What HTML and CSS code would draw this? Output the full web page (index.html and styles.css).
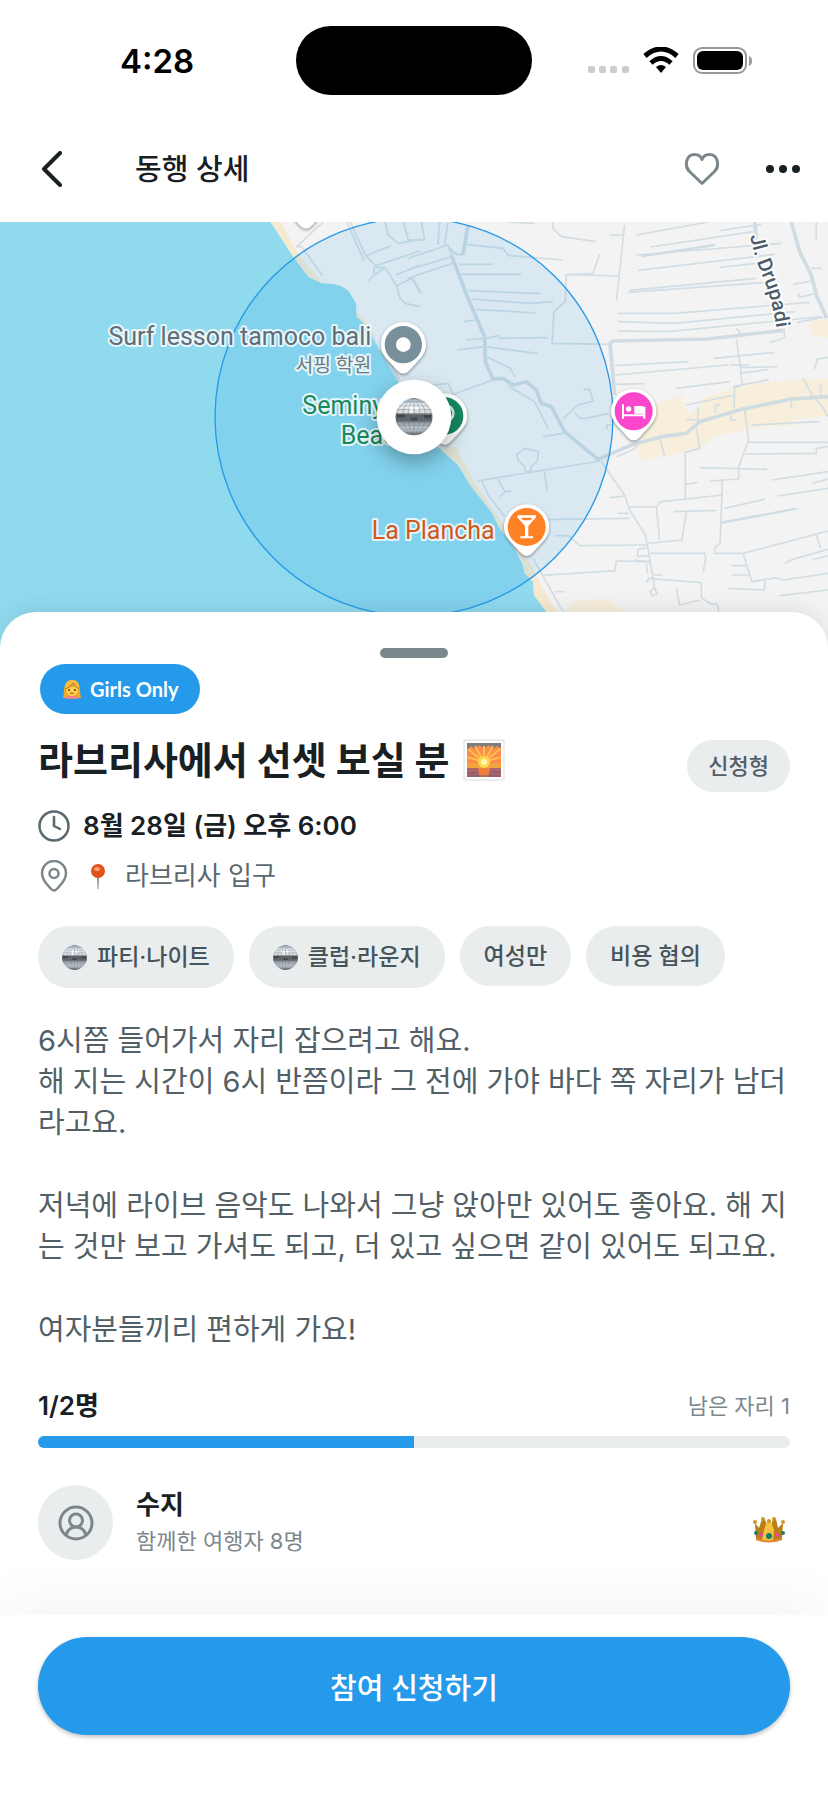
FILE: index.html
```html
<!DOCTYPE html>
<html lang="ko">
<head>
  <meta charset="UTF-8">
  <meta name="viewport" content="width=device-width, initial-scale=1.0">
  <title>동행 상세</title>
  <link rel="stylesheet" href="styles.css">
</head>
<body>
  <!-- shared drawings -->
  <svg class="defs" width="0" height="0" aria-hidden="true">
    <defs>
      <linearGradient id="ball-fill" x1="0" y1="0" x2="0" y2="1">
        <stop offset="0" stop-color="#a9c3d6"/>
        <stop offset=".2" stop-color="#eef1f3"/>
        <stop offset=".4" stop-color="#d5d9dd"/>
        <stop offset=".45" stop-color="#596066"/>
        <stop offset=".6" stop-color="#5f666b"/>
        <stop offset=".7" stop-color="#a9b0b5"/>
        <stop offset=".85" stop-color="#c3ccd3"/>
        <stop offset="1" stop-color="#5f676d"/>
      </linearGradient>
      <symbol id="ball" viewBox="0 0 48 48">
        <circle cx="24" cy="24" r="24" fill="url(#ball-fill)"/>
        <path d="M10 5h28M5 10h38M2 15h44M1 20h46M0 25h48M1 30h46M3 35h42M7 40h34M14 45h20" fill="none" stroke="#6a737a" opacity=".55"/>
        <path d="M24 0v48M24 0C14 9 14 39 24 48M24 0c10 9 10 39 0 48M24 0C4 9 4 39 24 48M24 0c20 9 20 39 0 48M24 0C-6 9-6 39 24 48M24 0c30 9 30 39 0 48" fill="none" stroke="#6a737a" opacity=".55"/>
        <path d="M2 21h10v4H2zM20 25h8v4h-8zM37 22h9v4h-9z" fill="#2f363b" opacity=".6"/>
        <path d="M18 11h5v4h-5zM25 11h5v4h-5zM18 16h5v3h-5z" fill="#fff" opacity=".8"/>
      </symbol>
      <path id="pin" d="M-68 0A68 68 0 1 1 68 0C68 32 44 46 20 76Q0 98-20 76C-44 46-68 32-68 0Z"/>
    </defs>
  </svg>

  <div class="status-bar">
    <span class="time">4:28</span>
    <span class="island"></span>
    <svg class="status-icons" width="164" height="28" viewBox="0 0 164 28" aria-hidden="true">
      <g fill="#c9cdd0">
        <rect x="0" y="19" width="7" height="7" rx="2"/>
        <rect x="11" y="19" width="7" height="7" rx="2"/>
        <rect x="22" y="19" width="7" height="7" rx="2"/>
        <rect x="34" y="19" width="7" height="7" rx="2"/>
      </g>
      <g fill="none" stroke="#000" stroke-width="5">
        <path d="M57 9Q73-5 89 9"/>
        <path d="M63 16Q73 7 83 16"/>
      </g>
      <path d="M68 20Q73 16 78 20L73 26Z"/>
      <rect x="106" y="1" width="52" height="25" rx="8" fill="none" stroke="#949a9d" stroke-width="2"/>
      <rect x="109" y="4" width="46" height="19" rx="6"/>
      <path d="M161 9q3 1 3 5t-3 5z" fill="#949a9d"/>
    </svg>
  </div>

  <header class="header">
    <button class="icon-button" type="button" aria-label="뒤로">
      <svg width="20" height="36" viewBox="0 0 20 36"><path d="M18 2L2 18l16 16" fill="none" stroke="#182024" stroke-width="4" stroke-linecap="round" stroke-linejoin="round"/></svg>
    </button>
    <h1 class="header-title">동행 상세</h1>
    <button class="icon-button like" type="button" aria-label="찜하기">
      <svg width="36" height="34" viewBox="0 0 36 34"><path d="M18 31.500L5.500 19.500C0 14 2 2.500 10.500 2.500C14.500 2.500 17 4.500 18 7.500C19 4.500 21.500 2.500 25.500 2.500C34 2.500 36 14 30.500 19.500Z" fill="none" stroke="#7c878c" stroke-width="3" stroke-linejoin="round"/></svg>
    </button>
    <button class="icon-button" type="button" aria-label="더보기">
      <svg width="34" height="8" viewBox="0 0 34 8" fill="#182024"><circle cx="4" cy="4" r="4"/><circle cx="17" cy="4" r="4"/><circle cx="30" cy="4" r="4"/></svg>
    </button>
  </header>

  <div class="map">
    <svg class="map-canvas" viewBox="0 21 2484 1290" preserveAspectRatio="xMidYMin slice" role="img" aria-label="모임 장소 지도">
      <rect y="21" width="2484" height="1290" fill="#90daee"/>
      <!-- land and beach -->
      <path d="M812 21L880 125 925 185 965 205 1000 207Q1045 215 1056 245L1068 265 1070 300 1110 340 1135 400 1175 465 1195 500 1240 640 1319 700 1374 750 1414 815 1474 890 1499 940 1544 1000 1569 1050 1574 1075 1599 1100 1602 1140 1639 1190 1700 1311H2484V21Z" fill="#f3f3f3"/>
      <path d="M812 21H842L890 110 960 195 965 205 925 185 880 125ZM1070 290L1118 345 1128 395 1110 345 1070 305ZM1319 700L1369 695 1419 795 1464 860 1509 930 1554 1000 1594 1050 1624 1110 1669 1190 1700 1311 1639 1190 1602 1140 1599 1100 1574 1075 1569 1050 1544 1000 1499 940 1474 890 1414 815 1374 750Z" fill="#f5ead0"/>
      <path d="M1135 400L1160 420 1200 490 1195 505 1175 465Z" fill="#dcdcdc"/>
      <g transform="translate(1224 0)">
        <path d="M685 690L700 736 875 705 915 665 1085 630 1110 635 1155 630V615L1260 602V490L1185 492 1060 505 980 518 880 552 876 575 840 600 822 542 750 560ZM1200 320L1260 312V370L1215 360ZM470 1190L500 1158 600 1152 650 1190Z" fill="#f7efdc"/>
        <!-- main roads -->
        <g fill="none" stroke="#d0dbe2" stroke-width="11" stroke-linejoin="round">
          <path d="M130 120L180 250 230 365 232 440 255 492 285 490 315 510 355 500 385 525 400 565 430 575 470 650 570 733 670 690 760 665 835 655 875 620 1000 583 1150 552 1260 545"/>
          <path d="M620 540L606 385 615 378 900 372 1125 346"/>
          <path d="M1150 21L1175 110 1210 180 1225 240 1256 310M180 30L165 120M1040 21L1045 75"/>
          <path d="M120 97L145 118 165 118M940 923L1165 881M700 124L920 90" stroke-width="7"/>
        </g>
        <!-- side streets -->
        <g fill="none" stroke="#d2dde4" stroke-width="5" stroke-linejoin="round">
          <path d="M0 130L120 90 130 120M0 165L130 125M0 190L135 145M95 21L90 90M120 21L110 90M0 75L50 75 40 21M0 195L15 190 40 235"/>
          <path d="M175 88L285 100 300 121 465 135M155 148H255M160 178H340M180 227L398 236M190 252L370 265 435 260M205 283L382 294M235 370L270 362 275 370 420 368M147 405L230 395 392 416M168 320L200 315M175 375L230 370"/>
          <path d="M235 425L305 458 322 487M130 540L255 495M300 512L380 560 420 640M405 665L465 655M465 610L510 570 555 558 545 523H527M500 592Q512 612 530 611L600 596M610 630H597V642"/>
          <path d="M327 718L350 700 392 710 388 738 370 755V768H350V755L330 735ZM208 798L575 738M408 765L418 828M268 788L290 830 310 828M275 845L290 832M222 798L240 840 290 905M375 1030L465 1190M395 914L665 910M440 962H480L515 992 720 990M405 1081L620 1067 625 1038 728 1040M440 1130H470"/>
          <path d="M435 21V40L460 65 565 80M300 21L380 25M650 30L640 120 625 258M605 60H645M575 118L555 175 475 180 472 260 438 290 432 385 606 388M475 178L630 183"/>
          <path d="M685 60L900 21M728 96L1035 50M935 47L1060 28M685 120L1120 85M690 166L1100 118M935 157L1095 140M665 226L1045 190M660 232L1110 200M628 295H800L1205 262M630 320L800 325 1160 290M628 348L780 350 1240 305"/>
          <path d="M620 452L840 440M622 480L960 450M918 430L1100 412M625 508L710 506M803 520L965 500M985 372L995 440 1003 510 980 518 978 580M965 450H1025M995 458L1108 455M995 475L1080 464M975 515L1082 494M985 340L995 350V368M1085 383L1130 368 1128 340"/>
          <path d="M1225 21V75M1210 160H1240M1155 208L1210 198M1225 235L1175 247 1170 235M1168 322L1245 307M1220 462L1228 432 1260 428M1185 490L1215 545 1240 570 1260 605M1238 510V545M1150 555V580M1030 630L1235 620M1020 682H1260"/>
          <path d="M835 570L980 540M870 575V615L835 613M922 595V572L935 568M968 590V615H985M1010 585L1022 675 992 755V792L905 798M756 670L770 725M865 640L875 700 832 712V850M832 808L868 803M874 758L1078 763M1012 717L1225 715V700L1260 695"/>
          <path d="M625 725L680 702 685 690M580 740L650 840 665 885 712 960 725 1030 740 1120M605 848L650 843M665 876H745L758 860 835 852 942 840V798M745 876L755 975M630 895H662M798 890L925 886M835 890L822 975 720 985M950 880L1072 852M942 840L936 985 920 998V1015H1005L1120 985 1260 948M1005 1015L1032 1100 1105 1088 1125 1095 1260 1075"/>
          <path d="M1092 795L1260 770M1108 843L1260 820M1213 805L1260 792M1225 960L1237 998M1130 1045L1155 1033 1260 1003M1212 1035L1260 1022M970 1052H1015M972 1080H1025M960 1120L1070 1125V1095M1116 1142L1260 1125M728 1015H890L893 1030 886 1070M690 1003L715 998M690 1003L688 1025 728 1022M680 1035L730 1042M715 1045L718 1075M740 1080H762M716 1103L722 1090 880 1103V1148L905 1165 928 1168 932 1190M805 1120L815 1170 875 1155M740 1118L726 1130 733 1142 747 1136Z"/>
        </g>
      </g>
      <g fill="none" stroke="#d2dde4" stroke-width="5" stroke-linejoin="round">
        <path d="M970 21L890 95H905L967 182M1040 21L1092 137M1050 21L1097 122 1127 152 1260 108M1097 122L1172 93M1155 21L1165 60 1195 85 1260 73M1210 21L1225 75M1105 198L1122 180V158H1155L1190 212 1200 250 1215 265 1260 275M1188 180L1260 150M1190 212L1235 190 1260 232M1122 180L1155 160"/>
        <path d="M1297 510L1344 505 1364 545"/>
      </g>

      <circle cx="1242" cy="606" r="597" fill="#2599ea" fill-opacity=".12" stroke="#2599ea" stroke-width="4"/>

      <!-- place markers -->
      <g class="markers">
        <use href="#pin" x="918" y="-46" fill="#fff"/>
        <g transform="translate(1334 603)">
          <use href="#pin" fill="#fff"/>
          <circle r="56" fill="#168a62"/>
          <circle cx="2" cy="-8" r="24" fill="none" stroke="#d9eee6" stroke-width="8"/>
        </g>
        <g transform="translate(1210 389)">
          <use href="#pin" fill="#fff"/>
          <circle r="56" fill="#78909c"/>
          <circle r="22" fill="#fff"/>
        </g>
        <g transform="translate(1901 589)">
          <use href="#pin" fill="#fff"/>
          <circle r="57" fill="#fa46cb"/>
          <path d="M-32-21V22M-32 12H32M32-14V22" fill="none" stroke="#fff" stroke-width="6"/>
          <circle cx="-15" cy="-7" r="8" fill="#fff"/>
          <path d="M2-16H24Q32-16 32-8V7H2Z" fill="#fff"/>
        </g>
        <g transform="translate(1580 936)">
          <use href="#pin" fill="#fff"/>
          <circle r="57" fill="#ff8126"/>
          <path d="M-28-35H28V-29L5-3V28H19V34H-19V28H-5V-3L-28-29ZM-17-28L-11-20H11L17-28Z" fill="#fff" fill-rule="evenodd"/>
        </g>
      </g>

      <g class="place-labels">
        <text x="1114" y="391" text-anchor="end" fill="#5f6e76">Surf lesson tamoco bali</text>
        <text class="place-type" x="1114" y="470" text-anchor="end" fill="#6c7b83">서핑 학원</text>
        <text x="907" y="597" fill="#18885f">Seminyak</text>
        <text x="1022" y="688" fill="#18885f">Beach</text>
        <text x="1484" y="973" text-anchor="end" fill="#d2581a">La Plancha</text>
        <path id="drupadi" d="M2250 62Q2262 125 2286 180Q2320 260 2332 360" fill="none"/>
        <text class="street"><textPath href="#drupadi">Jl. Drupadi</textPath></text>
      </g>

      <g class="meeting-pin">
        <circle cx="1242" cy="606" r="112" fill="#fff"/>
        <use href="#ball" x="1186" y="549" width="112" height="112"/>
      </g>
    </svg>
  </div>

  <main class="sheet">
    <div class="handle"></div>

    <div class="girls-only">
      <svg width="20" height="20" viewBox="0 0 20 20" aria-hidden="true">
        <path d="M1 19Q2 15 2 10Q3 1 10 1Q17 1 18 10Q18 15 19 19Z" fill="#eda72a"/>
        <path d="M4 18Q10 14 16 18V20H4Z" fill="#ec7f8c"/>
        <path d="M4 8H16V11Q15 17 10 17Q5 17 4 11Z" fill="#ffd04c"/>
        <path d="M3 10Q8 9 11 4Q13 8 17 10Q18 1 10 1Q3 1 3 10Z" fill="#f4bd46"/>
        <path d="M11 4Q8 9 3 10M11 4Q13 8 17 10" fill="none" stroke="#b8741b"/>
        <circle cx="7" cy="11" r="1" fill="#5a3c1c"/><circle cx="13" cy="11" r="1" fill="#5a3c1c"/>
        <path d="M8 14Q10 15 12 14" fill="none" stroke="#b5482e"/>
      </svg>
      <span>Girls Only</span>
    </div>

    <div class="title-row">
      <h2 class="title">
        라브리사에서 선셋 보실 분
        <svg width="42" height="42" viewBox="0 0 42 42" role="img" aria-label="일출">
          <rect x="1" y="1" width="40" height="40" fill="#fff" stroke="#dcdcdc"/>
          <rect x="4" y="4" width="34" height="34" fill="#fb8c4e"/>
          <path d="M4 4H38V9L34 7 30 10 26 6 21 9 16 6 12 10 8 7 4 11Z" fill="#7d7a83"/>
          <path d="M21 23L5 10M21 23L12 7M21 23V7M21 23L30 7M21 23L37 10M21 23L4 18M21 23L38 18" stroke="#ffc04a" stroke-width="2"/>
          <rect x="4" y="24" width="34" height="5" fill="#f5a43d"/>
          <rect x="4" y="29" width="34" height="9" fill="#a9656b"/>
          <circle cx="21" cy="23" r="6" fill="#ffd84f"/><circle cx="21" cy="23" r="3" fill="#fff3b0"/>
          <path d="M15 29H27L25 38H17Z" fill="#ee7f3c"/>
          <path d="M4 34H14M28 33H38M5 37H37" stroke="#7b5a70"/>
        </svg>
      </h2>
      <span class="join-type">신청형</span>
    </div>

    <div class="info date">
      <svg width="32" height="32" viewBox="0 0 32 32" aria-hidden="true"><g fill="none" stroke="#5b686f" stroke-width="2.500" stroke-linecap="round" stroke-linejoin="round"><circle cx="16" cy="16" r="14.500"/><path d="M16 7V16L22 19"/></g></svg>
      <span>8월 28일 (금) 오후 6:00</span>
    </div>
    <div class="info place">
      <svg width="32" height="32" viewBox="0 0 32 32" aria-hidden="true"><g fill="none" stroke="#7c878c" stroke-width="2.500"><path d="M16 30.500Q14 30.500 10 25.500Q4 19 4 13A12 12 0 0 1 28 13Q28 19 22 25.500Q18 30.500 16 30.500Z"/><circle cx="16" cy="13.500" r="4.500"/></g></svg>
      <svg class="pushpin" width="16" height="26" viewBox="0 0 16 26" aria-hidden="true"><path d="M7 12H9L8.500 26H7.500Z" fill="#8b8f93"/><circle cx="8" cy="8" r="7" fill="#e0531f"/><ellipse cx="7" cy="6" rx="3" ry="2" fill="#f8a06c"/></svg>
      <span>라브리사 입구</span>
    </div>

    <ul class="tags">
      <li class="tag tag-emoji"><svg width="25" height="25" aria-hidden="true"><use href="#ball"/></svg>파티·나이트</li>
      <li class="tag tag-emoji"><svg width="25" height="25" aria-hidden="true"><use href="#ball"/></svg>클럽·라운지</li>
      <li class="tag">여성만</li>
      <li class="tag">비용 협의</li>
    </ul>

    <div class="description">
      <p>6시쯤 들어가서 자리 잡으려고 해요.<br>해 지는 시간이 6시 반쯤이라 그 전에 가야 바다 쪽 자리가 남더라고요.</p>
      <p>저녁에 라이브 음악도 나와서 그냥 앉아만 있어도 좋아요. 해 지는 것만 보고 가셔도 되고, 더 있고 싶으면 같이 있어도 되고요.</p>
      <p>여자분들끼리 편하게 가요!</p>
    </div>

    <div class="seats">
      <strong>1/2명</strong>
      <span>남은 자리 1</span>
    </div>
    <div class="progress" role="progressbar" aria-label="모집 인원" aria-valuemin="0" aria-valuemax="2" aria-valuenow="1">
      <div class="progress-fill" style="width: 50%"></div>
    </div>

    <div class="member">
      <div class="avatar">
        <svg width="36" height="36" viewBox="0 0 36 36" aria-hidden="true"><g fill="none" stroke="#7c878c" stroke-width="3"><circle cx="18" cy="18" r="16"/><circle cx="18" cy="15.500" r="6.500"/><path d="M8 30Q10.500 22 18 22Q25.500 22 28 30"/></g></svg>
      </div>
      <div class="member-text">
        <div class="member-name">수지</div>
        <div class="member-sub">함께한 여행자 8명</div>
      </div>
      <svg class="crown" width="44" height="44" viewBox="0 0 44 44" role="img" aria-label="방장">
        <path d="M9 22L13 27 16 18H19L21 25 23 20 25 25 27 18H30L32 27 37 22 36 38Q23 44 10 38Z" fill="#b97f16"/>
        <path d="M16 39L18 29 21 20H25L28 29 27 40Q20 41 16 39Z" fill="#f7c243"/>
        <path d="M10 38Q23 43 36 38" fill="none" stroke="#dd8b38" stroke-width="2"/>
        <g fill="#cf982b"><circle cx="9" cy="21" r="2"/><circle cx="17" cy="18" r="2"/><circle cx="23" cy="20" r="2"/><circle cx="28" cy="18" r="2"/><circle cx="37" cy="21" r="2"/></g>
        <circle cx="23" cy="35" r="3" fill="#15806a"/><circle cx="10" cy="32" r="2" fill="#15806a"/><circle cx="37" cy="32" r="2" fill="#15806a"/>
        <circle cx="15" cy="34" r="2" fill="#f63fb3"/><circle cx="31" cy="34" r="2" fill="#f63fb3"/>
      </svg>
    </div>
  </main>

  <footer class="bottom-bar">
    <button class="join-button" type="button">참여 신청하기</button>
  </footer>
</body>
</html>
```
FILE: styles.css
```css
* {
  box-sizing: border-box;
}
body {
  margin: 0;
  min-height: 100vh;
  display: flex;
  flex-direction: column;
  background-color: #fff;
  color: #182024;
  font-family: Inter, "Noto Sans CJK KR", sans-serif;
}
h1, h2, p, ul {
  margin: 0;
  padding: 0;
}
svg {
  display: block;
  flex-shrink: 0;
}
button {
  border: 0;
  padding: 0;
  background: none;
  font-family: inherit;
  cursor: pointer;
}
.defs {
  position: absolute;
}

/* status bar */
.status-bar {
  display: grid;
  grid-template-columns: 1fr 236px 1fr;
  align-items: center;
  padding: 26px 0 21px;
}
.time {
  padding-left: 120px;
  color: #000;
  font-size: 33px;
  font-weight: 600;
  line-height: 40px;
}
.island {
  height: 69px;
  border-radius: 35px;
  background-color: #000;
}
.status-icons {
  justify-self: end;
  margin-right: 76px;
}

/* header */
.header {
  display: flex;
  align-items: center;
  height: 106px;
  padding: 0 28px 0 42px;
}
.icon-button {
  display: flex;
  align-items: center;
  justify-content: center;
  height: 48px;
}
.header-title {
  flex: 1;
  padding: 2px 0 0 73px;
  font-size: 29px;
  font-weight: 500;
  line-height: 40px;
}
.like {
  margin-right: 46px;
}

/* map */
.map {
  height: 430px;
}
.map-canvas {
  width: 100%;
  height: 100%;
}
.markers > * {
  filter: drop-shadow(0 4px 5px rgba(0, 0, 0, 0.4));
}
.meeting-pin {
  filter: drop-shadow(0 24px 30px rgba(0, 0, 0, 0.3));
}
.place-labels {
  font-family: Roboto, "Noto Sans CJK KR", sans-serif;
  font-size: 75px;
  paint-order: stroke;
  stroke: rgba(255, 255, 255, 0.8);
  stroke-width: 12px;
  stroke-linejoin: round;
}
.place-labels path {
  stroke: none;
}
.place-type {
  font-size: 58px;
}
.street {
  font-size: 60px;
  font-weight: 500;
  fill: #4c5b65;
}

/* sheet */
.sheet {
  position: relative;
  flex: 1;
  margin-top: -40px;
  padding: 36px 38px 55px;
  border-radius: 36px 36px 0 0;
  background-color: #fff;
  box-shadow: 0 -4px 20px rgba(0, 0, 0, 0.08);
}
.handle {
  width: 68px;
  height: 10px;
  margin: 0 auto 6px;
  border-radius: 5px;
  background-color: #7c878c;
}
.girls-only {
  display: flex;
  align-items: center;
  gap: 8px;
  width: fit-content;
  height: 50px;
  margin-left: 2px;
  padding: 0 22px;
  border-radius: 25px;
  background-color: #2599ea;
  color: #fff;
  font-family: Lato, sans-serif;
  font-size: 20px;
  font-weight: 700;
}
.title-row {
  display: flex;
  justify-content: space-between;
  align-items: flex-start;
  margin-top: 26px;
}
.title {
  display: flex;
  align-items: center;
  gap: 13px;
  font-size: 38px;
  font-weight: 700;
  line-height: 40px;
  height: 40px;
}
.join-type {
  padding: 10px 21px;
  border-radius: 26px;
  background-color: #e9edee;
  color: #525f66;
  font-size: 22px;
  font-weight: 500;
  line-height: 32px;
}
.info {
  display: flex;
  align-items: center;
  margin-top: 18px;
  font-size: 26px;
  line-height: 32px;
}
.date {
  gap: 13px;
  font-weight: 600;
}
.place {
  color: #5b686f;
}
.pushpin {
  margin: 0 19px 0 20px;
}
.tags {
  display: flex;
  flex-wrap: wrap;
  align-items: flex-start;
  gap: 15px;
  margin-top: 34px;
  list-style: none;
}
.tag {
  padding: 14px 24px;
  border-radius: 31px;
  background-color: #e9edee;
  color: #46545b;
  font-size: 23px;
  font-weight: 500;
  line-height: 32px;
}
.tag-emoji {
  display: flex;
  align-items: center;
  gap: 10px;
  line-height: 34px;
}
.description {
  display: flex;
  flex-direction: column;
  gap: 42px;
  margin-top: 32px;
  color: #525f66;
  font-size: 29px;
  line-height: 41px;
}
.seats {
  display: flex;
  justify-content: space-between;
  margin-top: 40px;
  font-size: 26px;
  line-height: 32px;
}
.seats strong {
  font-weight: 600;
}
.seats span {
  color: #7c878c;
  font-size: 22px;
}
.progress {
  height: 12px;
  margin-top: 14px;
  border-radius: 6px;
  background-color: #e9edee;
  overflow: hidden;
}
.progress-fill {
  height: 100%;
  background-color: #2599ea;
}
.member {
  display: flex;
  align-items: center;
  margin-top: 37px;
}
.avatar {
  display: flex;
  align-items: center;
  justify-content: center;
  width: 75px;
  height: 75px;
  border-radius: 50%;
  background-color: #e9edee;
}
.member-text {
  flex: 1;
  padding-left: 23px;
  line-height: 37px;
}
.member-name {
  font-size: 26px;
  font-weight: 600;
}
.member-sub {
  color: #7c878c;
  font-size: 22px;
}

/* bottom bar */
.bottom-bar {
  position: relative;
  padding: 22px 38px 64px;
  background-color: #fff;
  box-shadow: 0 -16px 50px rgba(0, 0, 0, 0.04);
}
.join-button {
  display: block;
  width: 100%;
  height: 98px;
  border-radius: 49px;
  background-color: #2599ea;
  box-shadow: 0 2px 4px rgba(0, 0, 0, 0.25);
  color: #fff;
  font-size: 29px;
  font-weight: 500;
}
```
